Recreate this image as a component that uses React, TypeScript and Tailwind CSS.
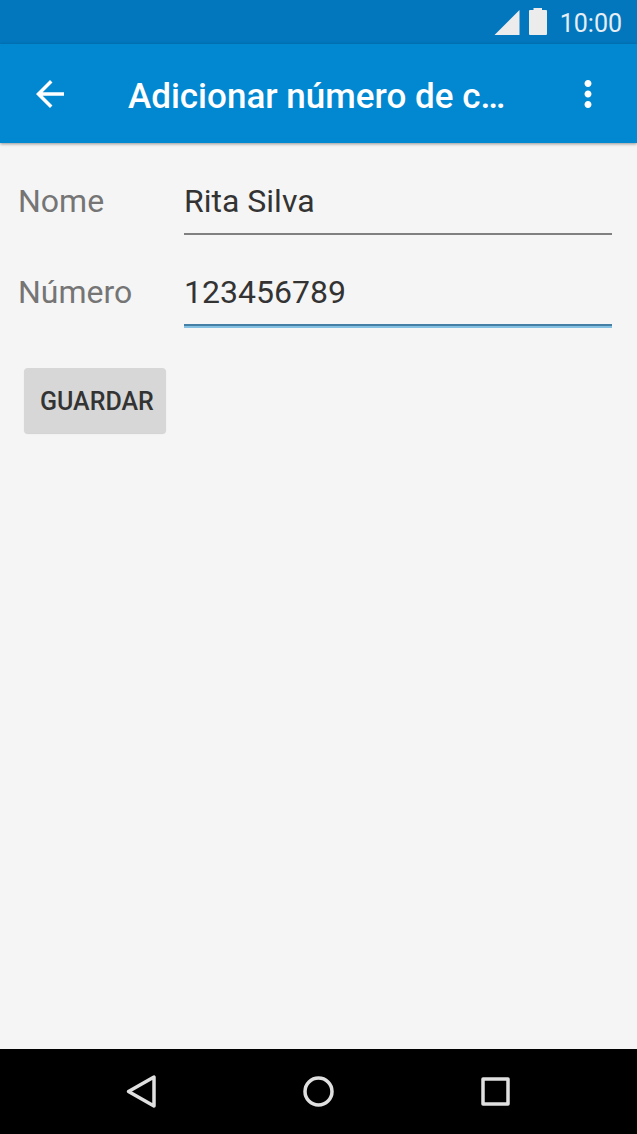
import React, { useState } from 'react';

const font = "font-[Roboto,'Noto_Sans',sans-serif]";

function StatusBar() {
  return (
    <div className="flex h-11 shrink-0 items-center justify-end bg-[#0277bd] pr-[15px] text-[#e6eef4]">
      <svg className="mr-2 h-7 w-[26px]" viewBox="0 0 26 28" fill="#ececec" aria-hidden="true">
        <path d="M0.5 27 L25.5 2 V27 Z" />
      </svg>
      <svg className="mr-3 h-7 w-5" viewBox="0 0 20 28" fill="#ececec" aria-hidden="true">
        <path d="M5.5 0 H14 V2 H18 Q19 2 19 3 V26 Q19 27 18 27 H2 Q1 27 1 26 V3 Q1 2 2 2 H5.5 Z" />
      </svg>
      <span className="pt-1 text-[25px] leading-7">10:00</span>
    </div>
  );
}

function AppBar() {
  return (
    <header className="z-10 flex h-[99px] shrink-0 items-center bg-[#0288d1] text-white shadow-[0_1px_3px_rgba(0,0,0,0.4)]">
      <button type="button" aria-label="Voltar" className="flex h-full w-[99px] shrink-0 items-center justify-center">
        <svg className="h-[42px] w-[42px]" viewBox="0 0 24 24" fill="currentColor">
          <path d="M20 11H7.83l5.59-5.59L12 4l-8 8 8 8 1.41-1.41L7.83 13H20v-2z" />
        </svg>
      </button>
      <h1 className="ml-[29px] min-w-0 flex-1 truncate pt-1.5 text-[35px] leading-[42px] font-medium">
        Adicionar número de c…
      </h1>
      <button type="button" aria-label="Mais opções" className="flex h-full w-[99px] shrink-0 items-center justify-center">
        <svg className="h-[42px] w-[42px]" viewBox="0 0 24 24" fill="currentColor">
          <path d="M12 8c1.1 0 2-.9 2-2s-.9-2-2-2-2 .9-2 2 .9 2 2 2zm0 2c-1.1 0-2 .9-2 2s.9 2 2 2 2-.9 2-2-.9-2-2-2zm0 6c-1.1 0-2 .9-2 2s.9 2 2 2 2-.9 2-2-.9-2-2-2z" />
        </svg>
      </button>
    </header>
  );
}

interface FieldProps {
  id: string;
  label: string;
  value: string;
  active?: boolean;
  onChange: (value: string) => void;
}

function Field({ id, label, value, active, onChange }: FieldProps) {
  return (
    <div className="flex h-[91px] items-start">
      <label htmlFor={id} className="w-[166px] shrink-0 pt-6 text-[32px] leading-10 text-[#757575]">
        {label}
      </label>
      <div className="min-w-0 flex-1 pt-6">
        <input
          id={id}
          type="text"
          value={value}
          onChange={(e) => onChange(e.target.value)}
          className="block h-10 w-full bg-transparent text-[32px] leading-10 text-[#333333] outline-none"
        />
        {active ? (
          <div className="mt-3 h-1 border-t-2 border-[#457fa5] bg-[#83c0e2]" />
        ) : (
          <div className="mt-3 h-0.5 bg-[#808080]" />
        )}
      </div>
    </div>
  );
}

function NavBar() {
  return (
    <nav className="flex h-[85px] shrink-0 bg-black px-[53px] text-[#e0e0e0]">
      <button type="button" aria-label="Retroceder" className="flex flex-1 items-center justify-center">
        <svg className="h-9 w-9" viewBox="0 0 36 36" fill="none" stroke="currentColor" strokeWidth="3.5" strokeLinejoin="round">
          <path d="M4.5 17.5 L30 3 V32 Z" />
        </svg>
      </button>
      <button type="button" aria-label="Início" className="flex flex-1 items-center justify-center">
        <svg className="h-9 w-9" viewBox="0 0 36 36" fill="none" stroke="currentColor" strokeWidth="3.5">
          <circle cx="17.5" cy="17.5" r="13.5" />
        </svg>
      </button>
      <button type="button" aria-label="Recentes" className="flex flex-1 items-center justify-center">
        <svg className="h-9 w-9" viewBox="0 0 36 36" fill="none" stroke="currentColor" strokeWidth="3.5" strokeLinejoin="round">
          <rect x="5" y="5" width="25" height="25" />
        </svg>
      </button>
    </nav>
  );
}

export default function App() {
  const [name, setName] = useState('Rita Silva');
  const [number, setNumber] = useState('123456789');

  const handleSubmit = (e: React.FormEvent) => {
    e.preventDefault();
  };

  return (
    <div className={`flex min-h-screen flex-col bg-[#f5f5f5] ${font}`}>
      <StatusBar />
      <AppBar />
      <form onSubmit={handleSubmit} className="flex-1 pt-[14px] pr-[25px] pl-[18px]">
        <Field id="name" label="Nome" value={name} onChange={setName} />
        <Field id="number" label="Número" value={number} onChange={setNumber} active />
        <button
          type="submit"
          className="mt-[29px] ml-1.5 h-[65px] rounded-[4px] bg-[#d7d7d7] pt-0.5 pr-3 pl-4 text-[25px] font-medium text-[#333333] shadow-[0_1px_1px_rgba(0,0,0,0.15)]"
        >
          GUARDAR
        </button>
      </form>
      <NavBar />
    </div>
  );
}
